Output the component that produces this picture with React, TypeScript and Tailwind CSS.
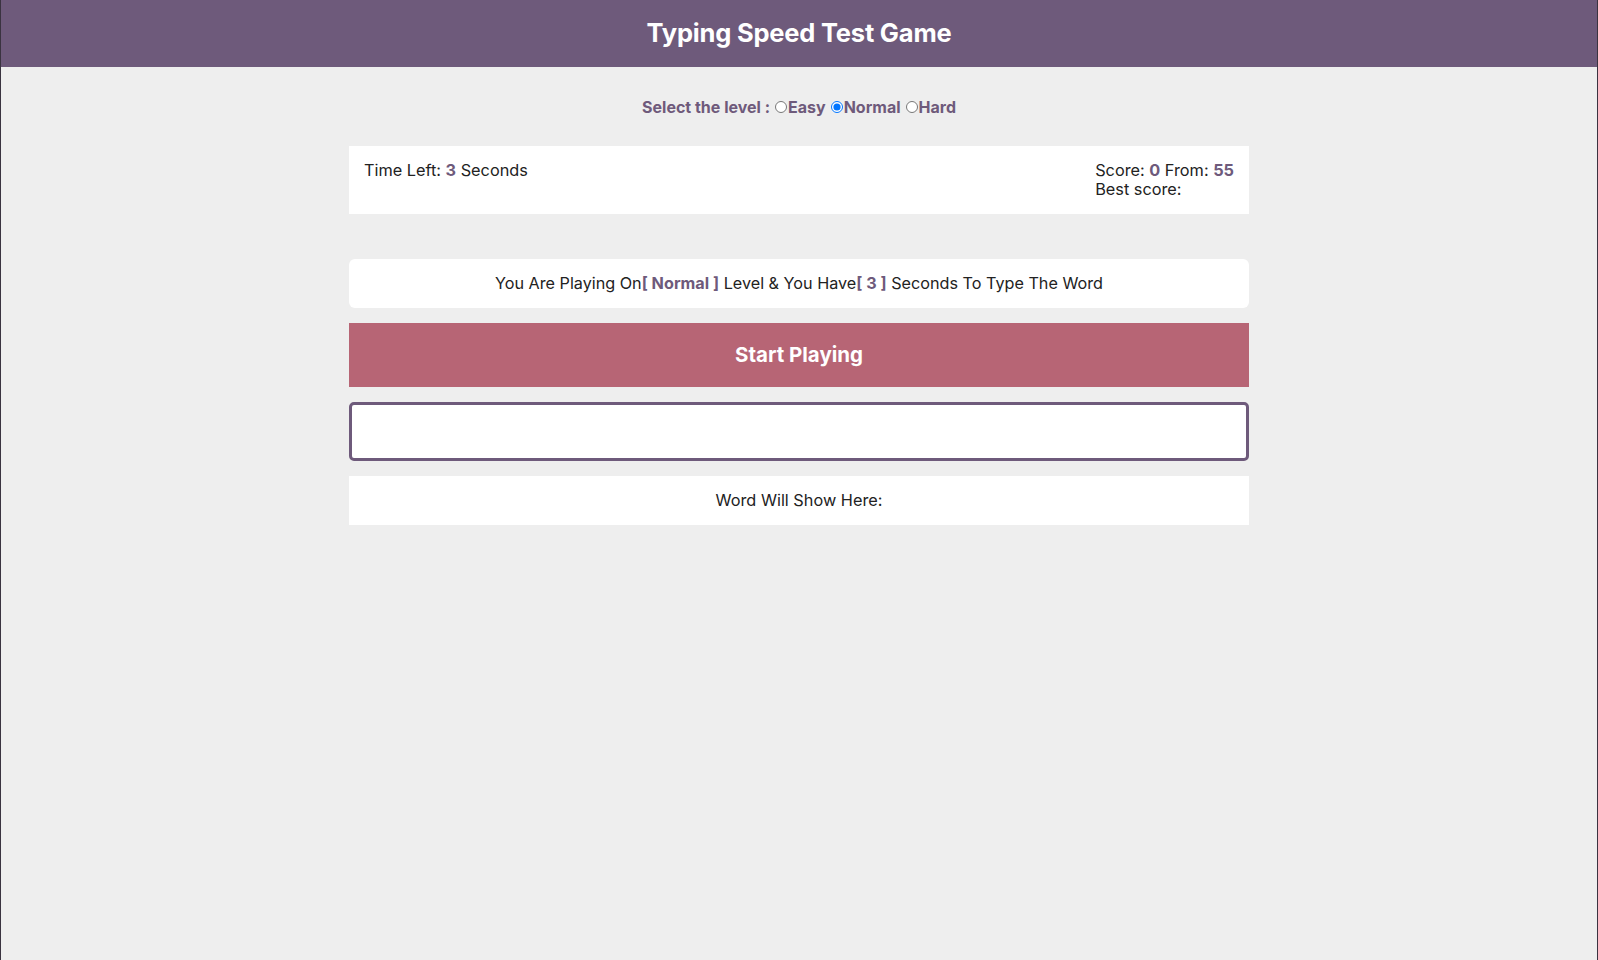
import React from "react";

export default function App() {
  return (
    <div
      className="min-h-[960px] bg-[#eeeeee] border-x border-[#3a3340] text-[#222] text-[16px]"
      style={{ fontFamily: "Inter, 'Noto Sans', sans-serif" }}
    >
      <header className="h-[67px] bg-[#6e5a7b] flex items-center justify-center">
        <h1 className="text-white font-bold text-[25.5px] tracking-[-0.2px]">Typing Speed Test Game</h1>
      </header>
      <div className="w-[900px] mx-auto">
        <div className="h-[79px] flex items-center justify-center text-[#6e5a7b] font-bold text-[16px]">
          <span>Select the level :</span>
          <label className="flex items-center ml-[5px]">
            <input type="radio" name="lvl" className="w-[12px] h-[12px] m-0 mr-[1px]" />
            Easy
          </label>
          <label className="flex items-center ml-[5px]">
            <input type="radio" name="lvl" defaultChecked className="w-[12px] h-[12px] m-0 mr-[1px]" />
            Normal
          </label>
          <label className="flex items-center ml-[5px]">
            <input type="radio" name="lvl" className="w-[12px] h-[12px] m-0 mr-[1px]" />
            Hard
          </label>
        </div>
        <div className="bg-white px-[15px] py-[15px] flex justify-between leading-[19px] text-[16.3px]">
          <div>
            Time Left: <span className="font-bold text-[#6e5a7b]">3</span> Seconds
          </div>
          <div>
            <div>
              Score: <span className="font-bold text-[#6e5a7b]">0</span> From:{" "}
              <span className="font-bold text-[#6e5a7b]">55</span>
            </div>
            <div>Best score:</div>
          </div>
        </div>
        <div className="mt-[45px] bg-white rounded-[6px] h-[49px] flex items-center justify-center text-[16.2px]">
          <span>
            You Are Playing On<span className="font-bold text-[#6e5a7b]">[ Normal ]</span> Level &amp; You Have
            <span className="font-bold text-[#6e5a7b]">[ 3 ]</span> Seconds To Type The Word
          </span>
        </div>
        <div className="mt-[15px] h-[64px] bg-[#b76575] flex items-center justify-center text-white font-bold text-[20.5px]">
          Start Playing
        </div>
        <input
          type="text"
          className="block mt-[15px] w-full h-[59px] bg-white border-[3px] border-[#6e5a7b] rounded-[5px] outline-none"
        />
        <div className="mt-[15px] h-[49px] bg-white flex items-center justify-center text-[16.3px]">
          Word Will Show Here:
        </div>
      </div>
    </div>
  );
}
